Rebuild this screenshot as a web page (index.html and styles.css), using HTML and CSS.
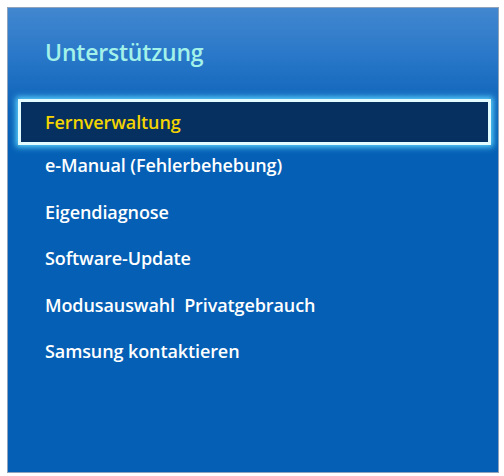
FILE: index.html
```html
<!DOCTYPE html>
<html>
<head>
    <title>Unterstützung</title>
    <meta charset="UTF-8" />
    <link rel="stylesheet" href="styles.css">
</head>
<body>
    <div class="panel">
        <h1 class="title">Unterstützung</h1>
        <ul class="menu">
            <li class="item selected">Fernverwaltung</li>
            <li class="item">e-Manual (Fehlerbehebung)</li>
            <li class="item">Eigendiagnose</li>
            <li class="item">Software-Update</li>
            <li class="item">Modusauswahl&nbsp; Privatgebrauch</li>
            <li class="item">Samsung kontaktieren</li>
        </ul>
    </div>
</body>
</html>
```

FILE: styles.css
```css
body {
    margin: 0;
    background: #ffffff;
    font-family: "Open Sans", "Noto Sans", sans-serif;
}

.panel {
    box-sizing: border-box;
    margin: 7px 0 0 7px;
    width: 492px;
    height: 466px;
    border: 1px solid #8fa3bb;
    background: linear-gradient(180deg, #4287cf 0%, #2a78c9 10%, #0c63b9 22%, #0560b5 30%, #0560b5 100%);
    padding-top: 29px;
}

.title {
    margin: 0 0 0 37px;
    font-size: 23px;
    font-weight: 600;
    color: #a2f2ea;
    line-height: 30px;
    letter-spacing: -0.2px;
}

.menu {
    list-style: none;
    margin: 32px 0 0 0;
    padding: 0;
}

.item {
    box-sizing: border-box;
    height: 46.5px;
    padding-left: 37px;
    display: flex;
    align-items: center;
    font-size: 18px;
    font-weight: 600;
    color: #ffffff;
    letter-spacing: -0.1px;
}

.item:nth-child(2) {
    margin-top: -3px;
}

.selected {
    height: 46px;
    margin: 0 7px 0 10px;
    padding-left: 24px;
    background: #05305f;
    color: #f4d400;
    border: 3px solid #e2fbff;
    box-shadow: 0 0 6px 2px #5fd6ff;
    font-size: 18px;
}
```
